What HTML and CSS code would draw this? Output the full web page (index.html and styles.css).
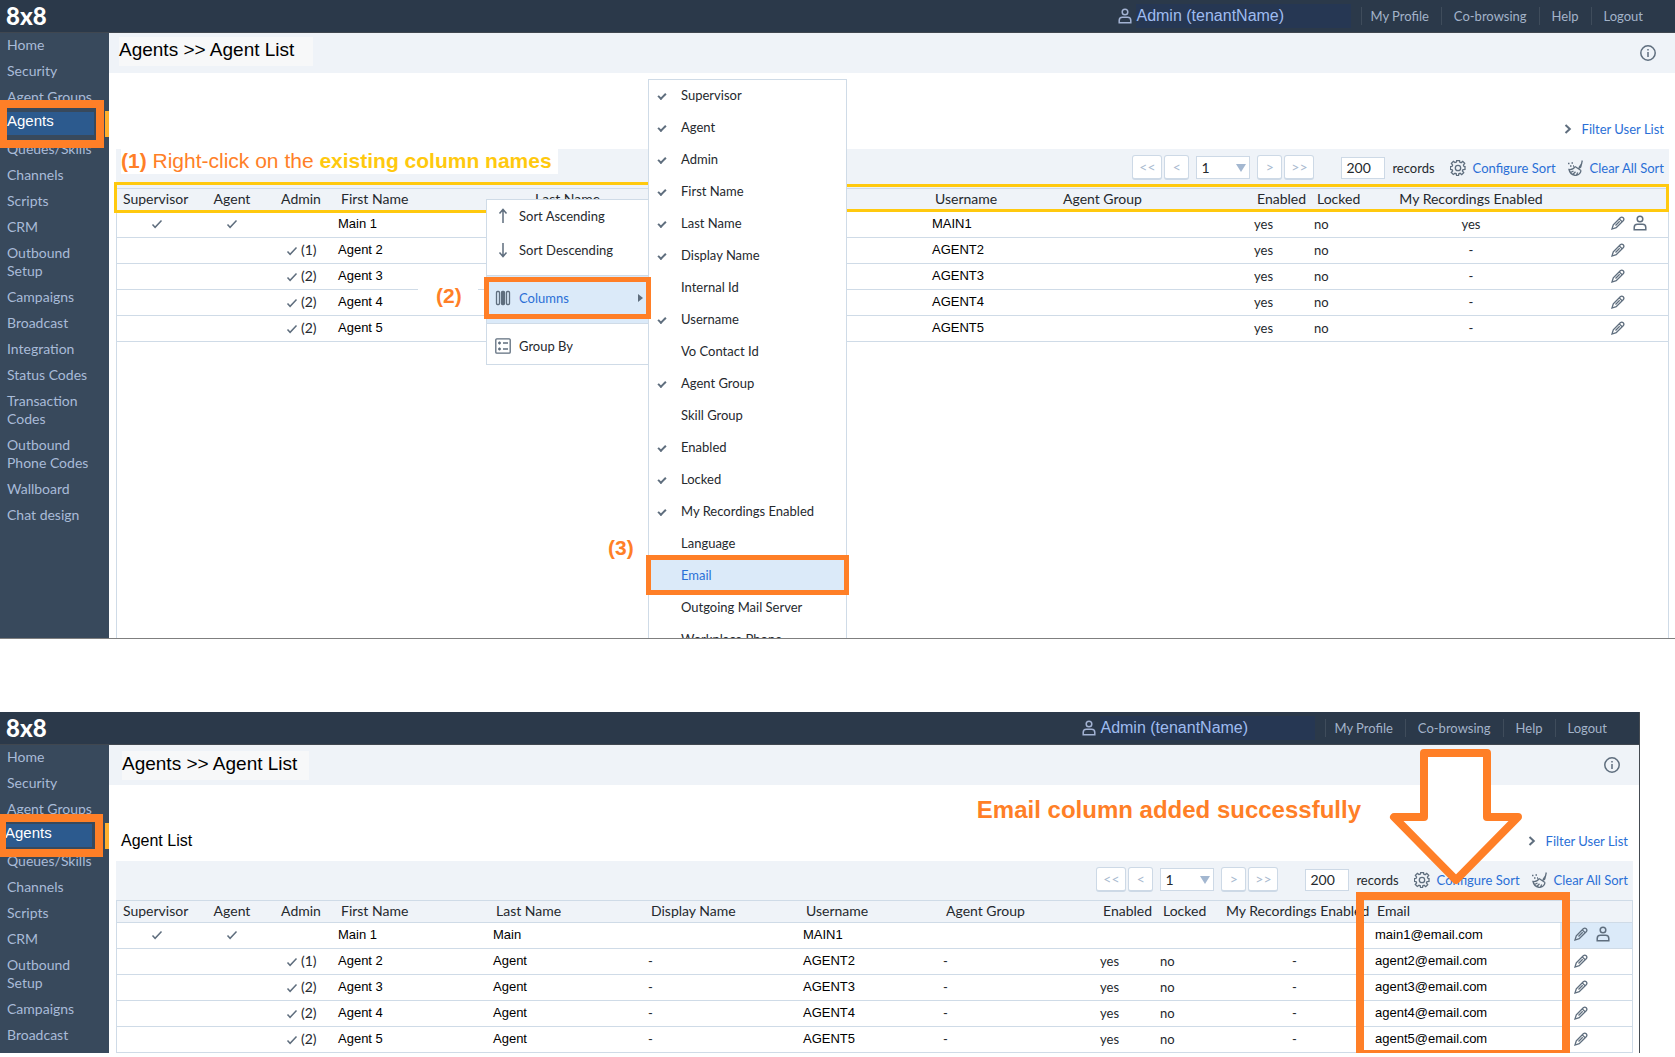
FILE: index.html
```html
<!DOCTYPE html>
<html lang="en">
<head>
<meta charset="utf-8">
<title>Agents - Agent List</title>
<link rel="stylesheet" href="styles.css">
</head>
<body>
<svg class="sprite" aria-hidden="true">
  <symbol id="user" viewBox="0 0 14 16"><circle cx="7" cy="4" r="2.8"/><path d="M1.2 14.8v-2.3q0-3.2 3.2-3.2h5.2q3.2 0 3.2 3.2v2.3z"/></symbol>
  <symbol id="tick" viewBox="0 0 12 10"><path d="M1.5 5.500l2.600 2.800L10.500 1.500"/></symbol>
  <symbol id="pencil" viewBox="0 0 14 14"><path d="M1 13L2.300 8.800 9.300 1.800Q10.800.4 12.200 1.800 13.600 3.200 12.200 4.700L5.200 11.700zM8.300 2.900l2.800 2.800M4.500 9.500l4.200-4.200"/></symbol>
  <symbol id="info" viewBox="0 0 18 18"><circle cx="9" cy="9" r="7.200"/><path d="M9 8v5M9 5v1.500"/></symbol>
  <symbol id="gear" viewBox="0 0 16 16"><path d="M15 6.600v2.800l-2 .3-.6 1.300 1.300 1.600-2 2-1.600-1.300-1.300.5-.3 1.800H6.600l-.3-1.800-1.300-.5-1.700 1.200-2-2L2.600 11 2 9.600l-1.600-.2V6.600L2 6.400l.6-1.400-1.200-1.600 2-2L5 2.600l1.400-.5.3-1.600h2.800l.2 1.600 1.400.6 1.600-1.300 2 2-1.300 1.600.6 1.400z"/><circle cx="8" cy="8" r="2.700"/></symbol>
  <symbol id="broom" viewBox="0 0 16 16"><path d="M15.300.5L14 6Q13.800 8.300 11.500 8.200M15 3l-3 4.500M8 6.500l6 4M8 6.500Q6.500 10 2 9.500q1 5 6.500 6 5-1 5.500-5M3.500 12.500l3-1.500M6 14.200l2.500-2.500M9.500 15l1.200-2.500M1 3.500h1.500M4.500 3H6M3 6h1.500M6 6h1"/></symbol>
  <symbol id="chevron" viewBox="0 0 8 10"><path d="M1.500 1l4.300 4-4.300 4"/></symbol>
  <symbol id="up" viewBox="0 0 10 16"><path d="M5 15V2M1.500 5.500L5 1.500l3.500 4"/></symbol>
  <symbol id="down" viewBox="0 0 10 16"><path d="M5 1v13M1.500 10.500L5 14.500l3.500-4"/></symbol>
  <symbol id="columns" viewBox="0 0 16 16"><rect x="1.500" y="1.500" width="3" height="13" rx="1"/><rect x="6.500" y="1.500" width="3" height="13" rx="1" fill="#5f6e7e"/><rect x="11.500" y="1.500" width="3" height="13" rx="1"/></symbol>
  <symbol id="group" viewBox="0 0 16 16"><rect x=".8" y=".8" width="14.400" height="14.400" rx="1"/><path d="M3 5h3M4.500 3.500v3M3 11h3M4.500 9.500v3M8 5h5M8 11h5"/></symbol>
</svg>

<section class="app app-first">
  <header class="topbar">
    <span class="logo">8x8</span>
    <div class="account"><svg class="icon user"><use href="#user"/></svg><span class="tenant">Admin (tenantName)</span></div>
    <nav class="links"><a href="#">My Profile</a><a href="#">Co-browsing</a><a href="#">Help</a><a href="#">Logout</a></nav>
  </header>
  <div class="body">
    <nav class="side">
      <a href="#">Home</a><a href="#">Security</a><a href="#">Agent Groups</a>
      <a href="#" class="active"><span>Agents</span></a>
      <a href="#">Queues/Skills</a><a href="#">Channels</a><a href="#">Scripts</a><a href="#">CRM</a><a href="#">Outbound Setup</a><a href="#">Campaigns</a><a href="#">Broadcast</a><a href="#">Integration</a><a href="#">Status Codes</a><a href="#">Transaction Codes</a><a href="#">Outbound Phone Codes</a><a href="#">Wallboard</a><a href="#">Chat design</a>
    </nav>
    <main class="main">
      <div class="titlebar"><h1>Agents &gt;&gt; Agent List</h1><button class="plain" aria-label="Information"><svg class="icon info"><use href="#info"/></svg></button></div>
      <div class="filter"><a href="#"><svg class="icon chevron"><use href="#chevron"/></svg>Filter User List</a></div>
      <div class="list">
        <div class="toolbar">
          <p class="step-one"><b>(1)</b> Right-click on the <b class="gold">existing column names</b></p>
          <div class="pager">
            <button class="wide">&lt;&lt;</button><button>&lt;</button>
            <select aria-label="Page"><option>1</option></select>
            <button>&gt;</button><button class="wide">&gt;&gt;</button>
          </div>
          <label class="records"><input type="text" value="200">records</label>
          <a href="#" class="tool"><svg class="icon gear"><use href="#gear"/></svg>Configure Sort</a>
          <a href="#" class="tool"><svg class="icon gear"><use href="#broom"/></svg>Clear All Sort</a>
        </div>
        <div class="grid">
          <table>
            <colgroup><col class="c80"><col class="c70"><col class="c68"><col class="c194"><col class="c200"><col class="c200"><col class="c128"><col><col class="c60"><col class="c60"><col class="c200"><col class="c97"></colgroup>
            <thead><tr><th>Supervisor</th><th class="mid">Agent</th><th class="mid">Admin</th><th>First Name</th><th>Last Name</th><th></th><th>Username</th><th>Agent Group</th><th>Enabled</th><th>Locked</th><th class="mid">My Recordings Enabled</th><th></th></tr></thead>
            <tbody>
              <tr><td class="mid"><svg class="icon tick"><use href="#tick"/></svg></td><td class="mid"><svg class="icon tick"><use href="#tick"/></svg></td><td></td><td class="name">Main 1</td><td></td><td></td><td class="name">MAIN1</td><td></td><td>yes</td><td>no</td><td class="mid">yes</td><td class="acts"><button class="plain" aria-label="Edit"><svg class="icon pencil"><use href="#pencil"/></svg></button><button class="plain" aria-label="User"><svg class="icon user"><use href="#user"/></svg></button></td></tr>
              <tr><td></td><td></td><td class="adm"><svg class="icon tick"><use href="#tick"/></svg>(1)</td><td class="name">Agent 2</td><td></td><td></td><td class="name">AGENT2</td><td></td><td>yes</td><td>no</td><td class="mid">-</td><td class="acts"><button class="plain" aria-label="Edit"><svg class="icon pencil"><use href="#pencil"/></svg></button></td></tr>
              <tr><td></td><td></td><td class="adm"><svg class="icon tick"><use href="#tick"/></svg>(2)</td><td class="name">Agent 3</td><td></td><td></td><td class="name">AGENT3</td><td></td><td>yes</td><td>no</td><td class="mid">-</td><td class="acts"><button class="plain" aria-label="Edit"><svg class="icon pencil"><use href="#pencil"/></svg></button></td></tr>
              <tr><td></td><td></td><td class="adm"><svg class="icon tick"><use href="#tick"/></svg>(2)</td><td class="name">Agent 4</td><td></td><td></td><td class="name">AGENT4</td><td></td><td>yes</td><td>no</td><td class="mid">-</td><td class="acts"><button class="plain" aria-label="Edit"><svg class="icon pencil"><use href="#pencil"/></svg></button></td></tr>
              <tr><td></td><td></td><td class="adm"><svg class="icon tick"><use href="#tick"/></svg>(2)</td><td class="name">Agent 5</td><td></td><td></td><td class="name">AGENT5</td><td></td><td>yes</td><td>no</td><td class="mid">-</td><td class="acts"><button class="plain" aria-label="Edit"><svg class="icon pencil"><use href="#pencil"/></svg></button></td></tr>
            </tbody>
          </table>
        </div>
      </div>
    </main>
  </div>

  <div class="gold-box gold-left"></div>
  <div class="gold-box gold-right"></div>
  <b class="step step-two">(2)</b>
  <b class="step step-three">(3)</b>
  <div class="menu columns">
    <label><input type="checkbox" checked>Supervisor</label>
    <label><input type="checkbox" checked>Agent</label>
    <label><input type="checkbox" checked>Admin</label>
    <label><input type="checkbox" checked>First Name</label>
    <label><input type="checkbox" checked>Last Name</label>
    <label><input type="checkbox" checked>Display Name</label>
    <label><input type="checkbox">Internal Id</label>
    <label><input type="checkbox" checked>Username</label>
    <label><input type="checkbox">Vo Contact Id</label>
    <label><input type="checkbox" checked>Agent Group</label>
    <label><input type="checkbox">Skill Group</label>
    <label><input type="checkbox" checked>Enabled</label>
    <label><input type="checkbox" checked>Locked</label>
    <label><input type="checkbox" checked>My Recordings Enabled</label>
    <label><input type="checkbox">Language</label>
    <label class="chosen"><input type="checkbox">Email</label>
    <label><input type="checkbox">Outgoing Mail Server</label>
    <label><input type="checkbox">Workplace Phone</label>
  </div>
  <div class="menu context">
    <button><svg class="icon arrow"><use href="#up"/></svg>Sort Ascending</button>
    <button><svg class="icon arrow"><use href="#down"/></svg>Sort Descending</button>
    <hr>
    <button class="chosen"><svg class="icon gear"><use href="#columns"/></svg>Columns<span class="more"></span></button>
    <hr>
    <button><svg class="icon gear"><use href="#group"/></svg>Group By</button>
  </div>
</section>

<section class="app app-second">
  <header class="topbar">
    <span class="logo">8x8</span>
    <div class="account"><svg class="icon user"><use href="#user"/></svg><span class="tenant">Admin (tenantName)</span></div>
    <nav class="links"><a href="#">My Profile</a><a href="#">Co-browsing</a><a href="#">Help</a><a href="#">Logout</a></nav>
  </header>
  <div class="body">
    <nav class="side">
      <a href="#">Home</a><a href="#">Security</a><a href="#">Agent Groups</a>
      <a href="#" class="active"><span>Agents</span></a>
      <a href="#">Queues/Skills</a><a href="#">Channels</a><a href="#">Scripts</a><a href="#">CRM</a><a href="#">Outbound Setup</a><a href="#">Campaigns</a><a href="#">Broadcast</a>
    </nav>
    <main class="main">
      <div class="titlebar"><h1>Agents &gt;&gt; Agent List</h1><button class="plain" aria-label="Information"><svg class="icon info"><use href="#info"/></svg></button></div>
      <div class="filter"><h2>Agent List</h2><a href="#"><svg class="icon chevron"><use href="#chevron"/></svg>Filter User List</a></div>
      <div class="list">
        <div class="toolbar">
          <div class="pager">
            <button class="wide">&lt;&lt;</button><button>&lt;</button>
            <select aria-label="Page"><option>1</option></select>
            <button>&gt;</button><button class="wide">&gt;&gt;</button>
          </div>
          <label class="records"><input type="text" value="200">records</label>
          <a href="#" class="tool"><svg class="icon gear"><use href="#gear"/></svg>Configure Sort</a>
          <a href="#" class="tool"><svg class="icon gear"><use href="#broom"/></svg>Clear All Sort</a>
        </div>
        <div class="grid">
          <table>
            <colgroup><col class="c80"><col class="c70"><col class="c68"><col class="c155"><col class="c155"><col class="c155"><col class="c140"><col><col class="c60"><col class="c63"><col class="c149"><col class="c191"><col class="c72"></colgroup>
            <thead><tr><th>Supervisor</th><th class="mid">Agent</th><th class="mid">Admin</th><th>First Name</th><th>Last Name</th><th>Display Name</th><th>Username</th><th>Agent Group</th><th>Enabled</th><th>Locked</th><th>My Recordings Enabled</th><th class="email">Email</th><th></th></tr></thead>
            <tbody>
              <tr><td class="mid"><svg class="icon tick"><use href="#tick"/></svg></td><td class="mid"><svg class="icon tick"><use href="#tick"/></svg></td><td></td><td class="name">Main 1</td><td class="name">Main</td><td></td><td class="name">MAIN1</td><td></td><td></td><td></td><td></td><td class="name email">main1@email.com</td><td class="acts lit"><button class="plain" aria-label="Edit"><svg class="icon pencil"><use href="#pencil"/></svg></button><button class="plain" aria-label="User"><svg class="icon user"><use href="#user"/></svg></button></td></tr>
              <tr><td></td><td></td><td class="adm"><svg class="icon tick"><use href="#tick"/></svg>(1)</td><td class="name">Agent 2</td><td class="name">Agent</td><td>-</td><td class="name">AGENT2</td><td>-</td><td>yes</td><td>no</td><td class="mid">-</td><td class="name email">agent2@email.com</td><td class="acts"><button class="plain" aria-label="Edit"><svg class="icon pencil"><use href="#pencil"/></svg></button></td></tr>
              <tr><td></td><td></td><td class="adm"><svg class="icon tick"><use href="#tick"/></svg>(2)</td><td class="name">Agent 3</td><td class="name">Agent</td><td>-</td><td class="name">AGENT3</td><td>-</td><td>yes</td><td>no</td><td class="mid">-</td><td class="name email">agent3@email.com</td><td class="acts"><button class="plain" aria-label="Edit"><svg class="icon pencil"><use href="#pencil"/></svg></button></td></tr>
              <tr><td></td><td></td><td class="adm"><svg class="icon tick"><use href="#tick"/></svg>(2)</td><td class="name">Agent 4</td><td class="name">Agent</td><td>-</td><td class="name">AGENT4</td><td>-</td><td>yes</td><td>no</td><td class="mid">-</td><td class="name email">agent4@email.com</td><td class="acts"><button class="plain" aria-label="Edit"><svg class="icon pencil"><use href="#pencil"/></svg></button></td></tr>
              <tr><td></td><td></td><td class="adm"><svg class="icon tick"><use href="#tick"/></svg>(2)</td><td class="name">Agent 5</td><td class="name">Agent</td><td>-</td><td class="name">AGENT5</td><td>-</td><td>yes</td><td>no</td><td class="mid">-</td><td class="name email">agent5@email.com</td><td class="acts"><button class="plain" aria-label="Edit"><svg class="icon pencil"><use href="#pencil"/></svg></button></td></tr>
            </tbody>
          </table>
        </div>
      </div>
    </main>
  </div>
  <div class="email-box"></div>
  <b class="success">Email column added successfully</b>
  <svg class="big-arrow" viewBox="0 0 134 140" aria-hidden="true"><path d="M35 5h63v64h31L67 132 5 69h30z"/></svg>
</section>
</body>
</html>
```
FILE: styles.css
```css
*, ::before, ::after { box-sizing: border-box; }
body { margin: 0; background: #fff; color: #25292e; font: 13px/18px Lato, "Open Sans", sans-serif; }
a { color: #2a6fd6; text-decoration: none; }
h1, h2, p { margin: 0; font-weight: 400; }
button, input, select { font: inherit; color: inherit; margin: 0; }
.sprite { position: absolute; width: 0; height: 0; }
.icon { flex: none; display: block; fill: none; stroke: #5f6e7e; stroke-width: 1.5; }
.user { width: 14px; height: 16px; }
.tick { width: 12px; height: 10px; }
.pencil { width: 14px; height: 14px; stroke-width: 1.3; }
.info { width: 18px; height: 18px; }
.gear { width: 16px; height: 16px; stroke-width: 1.3; }
.chevron { width: 8px; height: 10px; stroke-width: 2; }
.arrow { width: 16px; height: 16px; }
.plain { padding: 0; border: 0; background: none; }

.app { position: relative; display: flex; flex-direction: column; overflow: hidden; }
.app-first { min-height: 639px; border-bottom: 1px solid #7f7f7f; }
.app-second { margin: 73px 35px 3px 0; border-right: 1px solid #454b52; }

.topbar { display: flex; align-items: center; height: 33px; padding: 0 20px 0 6px; background: #2b394a; border-bottom: 1px solid #404750; color: #a3b3c9; }
.logo { flex: 1; color: #fff; font-size: 24px; font-weight: 900; line-height: 32px; }
.account { display: flex; align-items: center; gap: 4px; margin-right: 10px; }
.account .icon { stroke: #a3b3d3; }
.tenant { width: 215px; height: 24px; background: #263753; color: #9fbcf0; font: 16px/24px "Liberation Sans", Arial, sans-serif; }
.links { display: flex; }
.links a { padding: 0 12px; border-left: 1px solid #3f4c5b; color: #a3b3c9; }
.links a:first-child { padding-left: 8px; }

.body { flex: 1; display: flex; }
.side { width: 109px; flex: none; background: #38495c; font-size: 14px; }
.side a { display: block; padding: 3px 16px 5px 7px; color: #a9bbd8; }
.side .active { position: relative; height: 26px; padding: 1px 4px 2px 7px; border-right: 4px solid #ffb02e; }
.side .active span { display: block; width: 87px; padding-bottom: 5px; background: #2c5a8e; color: #fff; font: 15px/18px "Liberation Sans", Arial, sans-serif; }
.side .active::after { content: ""; position: absolute; left: -1px; top: -11px; width: 105px; height: 48px; border: 8px solid #ff7f27; }
.app-second .side .active { padding-left: 5px; }
.app-second .side .active::after { left: -2px; top: -9px; height: 43px; }

.main { flex: 1; min-width: 0; display: flex; flex-direction: column; }
.titlebar { display: flex; justify-content: space-between; align-items: center; height: 40px; padding: 0 18px 0 10px; background: #eff3f8; }
.titlebar h1 { width: 194px; margin-bottom: 4px; padding-bottom: 4px; background: #f7f8f9; color: #000; font: 19px/25px "Liberation Sans", Arial, sans-serif; white-space: nowrap; }
.app-second .titlebar { padding-left: 13px; }
.app-second .titlebar h1 { width: 187px; margin-bottom: 0; }
.filter { display: flex; align-items: center; height: 76px; padding: 36px 11px 0 12px; }
.filter a { display: flex; align-items: center; gap: 10px; margin-left: auto; }
.filter h2 { color: #000; font: 16px/18px "Liberation Sans", Arial, sans-serif; }

.list { flex: 1; display: flex; flex-direction: column; margin: 0 6px 0 7px; }
.toolbar { display: flex; align-items: center; height: 39px; padding: 0 5px 2px 0; background: #eff3f8; }
.step-one { align-self: flex-start; margin-left: 5px; padding: 0 6px 2px 0; background: #fff; color: #ff7f27; font: 21px/23px "Liberation Sans", Arial, sans-serif; white-space: nowrap; }
.gold { color: #ffc90e; }
.pager { position: relative; display: flex; align-items: center; gap: 2px; margin-left: auto; font-size: 14px; }
.pager button { width: 25px; height: 25px; padding: 0; background: #fff; border: 1px solid #cdd9e6; border-bottom-width: 2px; border-radius: 3px; color: #a9bad0; line-height: 20px; }
.pager .wide { width: 30px; }
.pager select { appearance: none; width: 54px; height: 23px; margin: 0 5px; padding: 0 4px; border: 1px solid #cdd9e6; border-radius: 0; background: #fff; }
.pager::after { content: ""; position: absolute; left: 104px; top: 9px; border: 5px solid transparent; border-top: 8px solid #a3b7d0; border-bottom: 0; }
.records { display: flex; align-items: center; gap: 7px; margin: 0 15px 0 27px; }
.records input { width: 44px; height: 22px; padding: 0 4px; border: 1px solid #cdd9e6; background: #fff; font-size: 14px; }
.tool { display: flex; align-items: center; gap: 7px; }
.tool + .tool { margin-left: 11px; }

.grid { flex: 1; border: solid #cfdbe7; border-width: 0 1px; }
table { width: 100%; table-layout: fixed; border-spacing: 0; }
th, td { padding: 0 0 2px 3px; text-align: left; white-space: nowrap; border-bottom: 1px solid #cfdbe7; }
th { height: 24px; padding-left: 6px; background: #eff3f8; border-top: 1px solid #cfdbe7; font-size: 14px; font-weight: 400; }
.app-second th { height: 23px; }
td { height: 26px; }
.mid { text-align: center; padding-left: 0; }
.mid .tick { margin: 0 auto; }
.name { color: #000; font: 13px/18px "Liberation Sans", Arial, sans-serif; }
.adm { padding-left: 19px; font-size: 14px; }
.adm .tick, .acts .plain { display: inline-block; vertical-align: middle; }
.adm .tick { margin-right: 3px; }
.acts { padding: 0 0 5px 40px; }
.acts .plain + .plain { margin-left: 8px; }
.app-second .acts { padding-left: 14px; }
th.email { padding-left: 8px; }
td.email { padding-left: 6px; }
.lit { background: #dbeaf9; }
.c60 { width: 60px; } .c63 { width: 63px; } .c68 { width: 68px; } .c70 { width: 70px; } .c72 { width: 72px; }
.c80 { width: 80px; } .c97 { width: 97px; } .c128 { width: 128px; } .c140 { width: 140px; } .c149 { width: 149px; }
.c155 { width: 155px; } .c191 { width: 191px; } .c194 { width: 194px; } .c200 { width: 200px; }

.gold-box { position: absolute; border: 3px solid #ffc90e; }
.gold-left { left: 114px; top: 182px; width: 535px; height: 31px; border-right: 0; }
.gold-right { left: 847px; right: 6px; top: 184px; height: 28px; border-left: 0; }
.step { position: absolute; color: #ff7f27; background: #fff; font: bold 21px/24px "Liberation Sans", Arial, sans-serif; }
.step-two { left: 418px; top: 284px; width: 60px; padding-left: 18px; }
.step-three { left: 608px; top: 536px; }
.menu { position: absolute; background: #fff; border: 1px solid #cfdbe7; }
.menu hr { margin: 0; border: 0; border-top: 1px solid #cfdbe7; }
.context { left: 486px; top: 199px; width: 163px; }
.context button { position: relative; display: flex; align-items: center; gap: 8px; width: 100%; height: 34px; padding: 0 8px 2px; border: 0; background: none; }
.context hr { margin-top: 7px; }
.context hr + button { height: 40px; padding-top: 6px; }
.context .chosen + hr { margin-top: 0; }
.context hr + button.chosen { height: 47px; padding: 0 8px 4px; background: #dbeaf9; color: #2a6fd6; }
.context .chosen::after, .columns .chosen::after { content: ""; position: absolute; border: 5px solid #ff7f27; }
.context .chosen::after { left: -3px; top: 1px; width: 167px; height: 42px; }
.more { margin-left: auto; margin-right: -3px; border: 4px solid transparent; border-left: 5px solid #5f6e7e; border-right: 0; }
.columns { left: 648px; top: 79px; width: 199px; }
.columns label { position: relative; display: flex; align-items: center; gap: 14px; height: 32px; padding: 0 8px 2px; }
.columns input { appearance: none; width: 10px; height: 6px; border: 0; }
.columns input:checked { margin: 0 1px 0 1px; width: 8px; height: 5px; border: solid #5f6e7e; border-width: 0 0 2px 2px; rotate: -45deg; }
.columns .chosen { background: #dbeaf9; color: #2a6fd6; }
.columns .chosen::after { left: -3px; right: -3px; top: -5px; height: 40px; }

.email-box { position: absolute; right: 69px; top: 180px; bottom: 0; width: 214px; border: 8px solid #ff7f27; border-bottom-width: 3px; }
.success { position: absolute; right: 278px; top: 84px; color: #ff7f27; font: bold 24px/28px "Liberation Sans", Arial, sans-serif; white-space: nowrap; }
.big-arrow { position: absolute; right: 116px; top: 36px; width: 134px; height: 140px; fill: #fff; stroke: #ff7f27; stroke-width: 8; stroke-linejoin: round; }
```
